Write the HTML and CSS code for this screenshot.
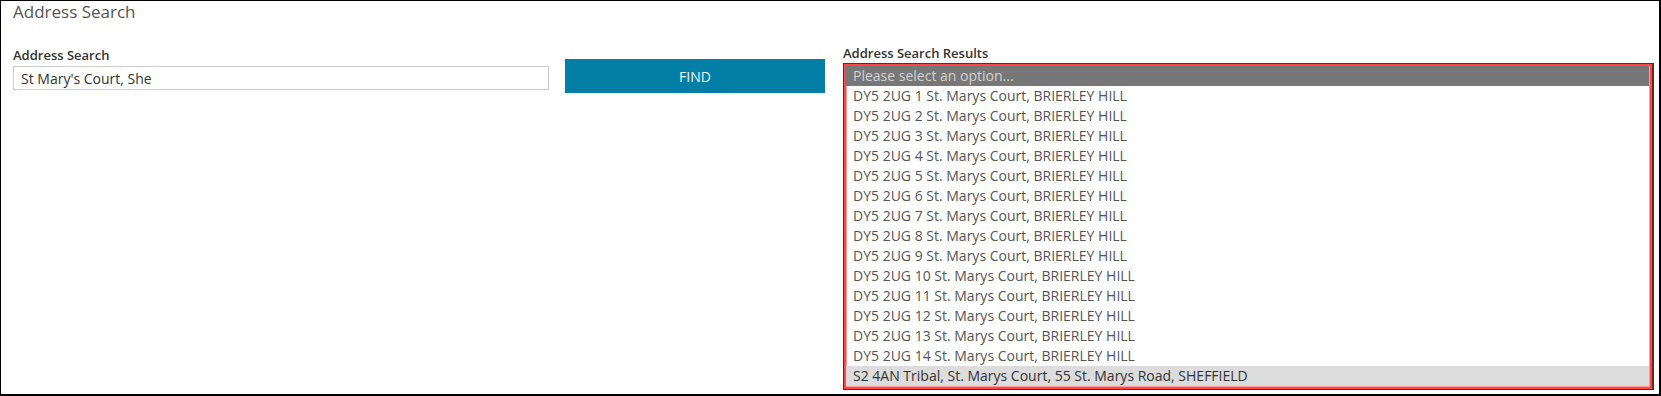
FILE: index.html
```html
<!DOCTYPE html>
<html lang="en">
<head>
<meta charset="utf-8">
<title>Address Search</title>
<link rel="stylesheet" href="styles.css">
</head>
<body>
<div class="page">
  <div class="title">Address Search</div>
  <div class="row">
    <div class="col-search">
      <label class="label" for="q">Address Search</label>
      <input id="q" class="input" type="text" value="St Mary's Court, She">
    </div>
    <div class="col-btn">
      <button class="find" type="button">FIND</button>
    </div>
    <div class="col-results">
      <div class="label">Address Search Results</div>
      <div class="listbox" role="listbox">
        <div class="opt placeholder">Please select an option...</div>
        <div class="opt">DY5 2UG 1 St. Marys Court, BRIERLEY HILL</div>
        <div class="opt">DY5 2UG 2 St. Marys Court, BRIERLEY HILL</div>
        <div class="opt">DY5 2UG 3 St. Marys Court, BRIERLEY HILL</div>
        <div class="opt">DY5 2UG 4 St. Marys Court, BRIERLEY HILL</div>
        <div class="opt">DY5 2UG 5 St. Marys Court, BRIERLEY HILL</div>
        <div class="opt">DY5 2UG 6 St. Marys Court, BRIERLEY HILL</div>
        <div class="opt">DY5 2UG 7 St. Marys Court, BRIERLEY HILL</div>
        <div class="opt">DY5 2UG 8 St. Marys Court, BRIERLEY HILL</div>
        <div class="opt">DY5 2UG 9 St. Marys Court, BRIERLEY HILL</div>
        <div class="opt">DY5 2UG 10 St. Marys Court, BRIERLEY HILL</div>
        <div class="opt">DY5 2UG 11 St. Marys Court, BRIERLEY HILL</div>
        <div class="opt">DY5 2UG 12 St. Marys Court, BRIERLEY HILL</div>
        <div class="opt">DY5 2UG 13 St. Marys Court, BRIERLEY HILL</div>
        <div class="opt">DY5 2UG 14 St. Marys Court, BRIERLEY HILL</div>
        <div class="opt selected">S2 4AN Tribal, St. Marys Court, 55 St. Marys Road, SHEFFIELD</div>
      </div>
    </div>
  </div>
</div>
</body>
</html>
```
FILE: styles.css
```css
* { box-sizing: border-box; }
html, body { margin: 0; padding: 0; background: #fff; }
body { font-family: "Open Sans", "Liberation Sans", sans-serif; }

.page {
  width: 1661px;
  height: 396px;
  border: 1px solid #000;
  border-right-width: 2px;
  border-bottom-width: 2px;
  padding: 0 5px 0 12px;
  overflow: hidden;
}

.title {
  font-size: 17px;
  line-height: 22px;
  color: #555;
  margin: 0;
}

.row {
  display: flex;
  align-items: flex-start;
  margin-top: 21px;
}

.label {
  display: block;
  font-size: 13px;
  font-weight: 600;
  line-height: 18px;
  color: #333;
}

.col-search {
  width: 536px;
  padding-top: 2px;
}

.input {
  display: block;
  width: 536px;
  height: 24px;
  margin-top: 2px;
  border: 1px solid #ccc;
  padding: 0 7px;
  font-family: "Open Sans", "Liberation Sans", sans-serif;
  font-size: 14px;
  color: #333;
  background: #fff;
  outline: none;
}

.col-btn {
  margin-left: 16px;
  padding-top: 15px;
}

.find {
  display: block;
  width: 260px;
  height: 34px;
  border: 0;
  padding: 0;
  background: #037fa7;
  color: #eef6f9;
  font-family: "Open Sans", "Liberation Sans", sans-serif;
  font-size: 14px;
  cursor: pointer;
}

.col-results {
  margin-left: 18px;
  width: 812px;
}

.listbox {
  margin-top: 1px;
  border: 1px solid #6a2424;
  border-right-width: 2px;
  background: #fff;
  box-shadow: inset 0 0 0 2px #ff4646, inset 0 0 0 3px #ff9a9a;
  padding: 2px 3px 3px 2px;
}

.opt {
  height: 20px;
  line-height: 20px;
  font-size: 14px;
  color: #555;
  padding-left: 7px;
  white-space: nowrap;
}

.opt.placeholder {
  background: #777;
  color: #d2d2d2;
}

.opt.selected {
  background: #dcdcdc;
  color: #333;
}
```
